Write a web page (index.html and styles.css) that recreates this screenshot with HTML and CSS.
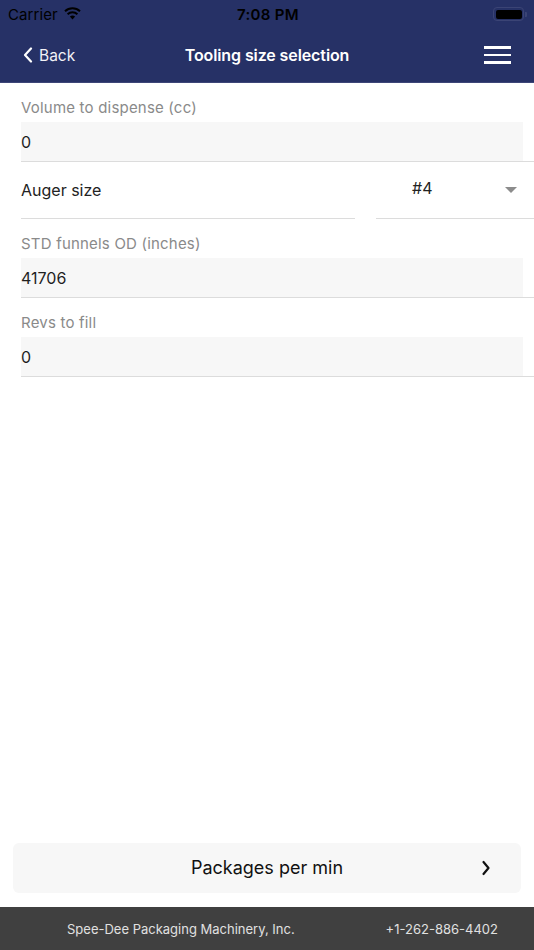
FILE: index.html
```html
<!DOCTYPE html>
<html>
<head>
<meta charset="utf-8">
<link rel="stylesheet" href="styles.css">
</head>
<body>
<div class="app">
  <header class="header">
    <div class="status">
      <div class="status-left">
        <span class="carrier">Carrier</span>
        <svg class="wifi" width="17" height="13" viewBox="0 0 17 13">
          <path d="M8.5 12.4 L5.9 9.6 A3.8 3.8 0 0 1 11.1 9.6 Z" fill="#000"/>
          <path d="M3.6 7.2 A7.2 7.2 0 0 1 13.4 7.2" fill="none" stroke="#000" stroke-width="2"/>
          <path d="M1 4.2 A11 11 0 0 1 16 4.2" fill="none" stroke="#000" stroke-width="2"/>
        </svg>
      </div>
      <span class="time">7:08 PM</span>
      <div class="status-right">
        <span class="battery"><span class="battery-fill"></span></span>
        <span class="battery-tip"></span>
      </div>
    </div>
    <nav class="nav">
      <div class="back">
        <svg width="10" height="16" viewBox="0 0 10 16"><path d="M8 1.5 L2 8 L8 14.5" fill="none" stroke="#fff" stroke-width="2.2" stroke-linecap="round" stroke-linejoin="round"/></svg>
        <span>Back</span>
      </div>
      <div class="title">Tooling size selection</div>
      <div class="menu">
        <span></span><span></span><span></span>
      </div>
    </nav>
  </header>

  <main class="content">
    <div class="field">
      <div class="label">Volume to dispense (cc)</div>
      <div class="input">0</div>
    </div>
    <div class="select-row">
      <div class="select-label">Auger size</div>
      <div class="select-value">
        <span>#4</span>
        <span class="caret"></span>
      </div>
    </div>
    <div class="field">
      <div class="label">STD funnels OD (inches)</div>
      <div class="input">41706</div>
    </div>
    <div class="field">
      <div class="label">Revs to fill</div>
      <div class="input">0</div>
    </div>
  </main>

  <div class="action">
    <button class="next">
      <span>Packages per min</span>
      <svg class="chev" width="10" height="16" viewBox="0 0 10 16"><path d="M2.5 2 L7.5 8 L2.5 14" fill="none" stroke="#111" stroke-width="2.2" stroke-linecap="round" stroke-linejoin="round"/></svg>
    </button>
  </div>

  <footer class="footer">
    <span class="company">Spee-Dee Packaging Machinery, Inc.</span>
    <span class="phone">+1-262-886-4402</span>
  </footer>
</div>
</body>
</html>
```

FILE: styles.css
```css
* { box-sizing: border-box; }
html, body { margin: 0; padding: 0; }
body {
  font-family: Inter, "Noto Sans", "Liberation Sans", sans-serif;
  background: #fff;
  color: #222;
}
.app {
  width: 534px;
  height: 950px;
  display: flex;
  flex-direction: column;
}
.header {
  background: #263166;
  height: 83px;
  border-bottom: 1px solid #3d4678;
}
.status {
  height: 28px;
  display: grid;
  grid-template-columns: 1fr auto 1fr;
  align-items: center;
  padding: 0 8px 0 8px;
}
.status-left {
  display: flex;
  align-items: center;
  gap: 6px;
}
.carrier {
  font-size: 15px;
  color: #000;
  letter-spacing: 0.1px;
}
.wifi { margin-top: -2px; }
.time {
  font-size: 15px;
  font-weight: 600;
  color: #000;
  letter-spacing: 0.3px;
  margin-left: 2px;
}
.status-right {
  display: flex;
  align-items: center;
  justify-content: flex-end;
  margin-right: -1px;
}
.battery {
  width: 31px;
  height: 14px;
  border: 1px solid #3b4475;
  border-radius: 4px;
  padding: 1.5px;
  display: flex;
}
.battery-fill {
  flex: 1;
  background: #000;
  border-radius: 2px;
}
.battery-tip {
  width: 2px;
  height: 5px;
  background: #3b4475;
  border-radius: 0 1px 1px 0;
  margin-left: 1px;
}
.nav {
  height: 54px;
  display: flex;
  align-items: center;
  justify-content: space-between;
  padding: 0 23px 0 23px;
  color: #fff;
}
.back {
  display: flex;
  align-items: center;
  gap: 6px;
  font-size: 15.5px;
  width: 80px;
  color: #f2f2f6;
}
.title {
  font-size: 16px;
  font-weight: 600;
  color: #fff;
  letter-spacing: -0.1px;
}
.menu {
  width: 80px;
  display: flex;
  flex-direction: column;
  align-items: flex-end;
  gap: 5px;
  padding-right: 0;
}
.menu span {
  display: block;
  width: 27px;
  height: 2.5px;
  background: #fff;
}
.content {
  flex: 1;
}
.field {
  margin-left: 21px;
  border-bottom: 1px solid #dcdcdc;
}
.label {
  padding: 16px 0 5px 0;
  line-height: 18px;
  font-size: 15px;
  color: #8a8a8a;
  letter-spacing: 0.2px;
}
.input {
  height: 39px;
  margin-right: 11px;
  background: #f7f7f7;
  font-size: 16px;
  line-height: 39px;
  color: #1f1f1f;
  padding-top: 1px;
}
.select-row {
  display: flex;
  height: 57px;
  margin-left: 21px;
  gap: 21px;
}
.select-label {
  width: 334px;
  border-bottom: 1px solid #dcdcdc;
  font-size: 16px;
  color: #222;
  display: flex;
  align-items: center;
  padding-top: 0;
}
.select-value {
  flex: 1;
  border-bottom: 1px solid #dcdcdc;
  display: flex;
  align-items: flex-start;
  justify-content: space-between;
  padding: 16px 17px 0 36px;
  font-size: 16px;
  color: #222;
}
.caret {
  width: 0;
  height: 0;
  border-left: 6px solid transparent;
  border-right: 6px solid transparent;
  border-top: 6px solid #8c8c8c;
  margin-top: 9px;
}
.action {
  padding: 0 13px 14px 13px;
}
.next {
  width: 100%;
  height: 50px;
  border: none;
  border-radius: 6px;
  background: #f7f7f7;
  display: flex;
  align-items: center;
  justify-content: center;
  position: relative;
  font-family: inherit;
  font-size: 18px;
  color: #111;
  padding: 0 0 1px 0;
}
.chev {
  position: absolute;
  right: 30px;
  top: 17px;
}
.footer {
  height: 43px;
  background: #404040;
  display: flex;
  align-items: center;
  justify-content: space-between;
  padding: 0 36px 0 67px;
  font-size: 13px;
  color: #e0e0e0;
}
```
